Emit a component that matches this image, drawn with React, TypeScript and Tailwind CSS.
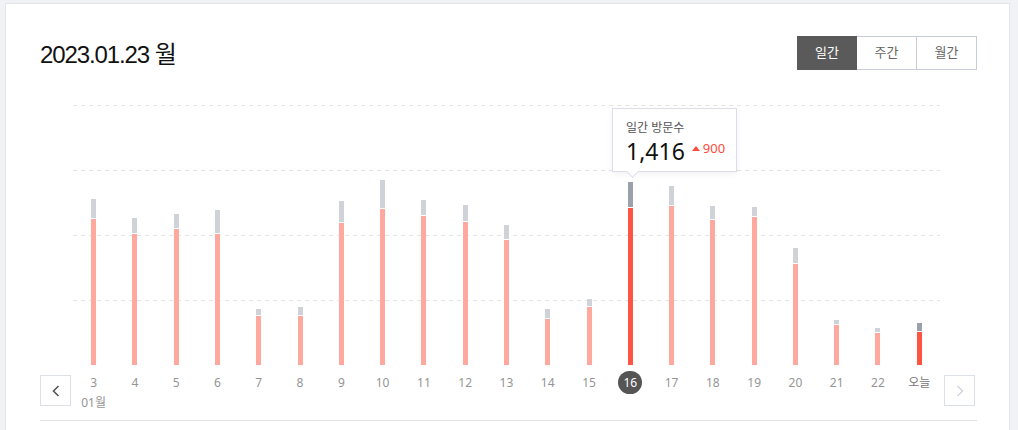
import React from "react";

type Bar = { l: string; g: number; r: number; hl?: boolean };

const BASE = 365;
const bars: Bar[] = [
  { l: "3", g: 199, r: 219 },
  { l: "4", g: 218, r: 234 },
  { l: "5", g: 214, r: 229 },
  { l: "6", g: 210, r: 234 },
  { l: "7", g: 309, r: 316 },
  { l: "8", g: 307, r: 316 },
  { l: "9", g: 201, r: 223 },
  { l: "10", g: 180, r: 209 },
  { l: "11", g: 200, r: 216 },
  { l: "12", g: 205, r: 222 },
  { l: "13", g: 225, r: 240 },
  { l: "14", g: 309, r: 319 },
  { l: "15", g: 299, r: 307 },
  { l: "16", g: 182, r: 208, hl: true },
  { l: "17", g: 186, r: 206 },
  { l: "18", g: 206, r: 220 },
  { l: "19", g: 207, r: 217 },
  { l: "20", g: 248, r: 264 },
  { l: "21", g: 320, r: 325 },
  { l: "22", g: 328, r: 333 },
  { l: "오늘", g: 323, r: 332, hl: true },
];

const font = { fontFamily: '"Noto Sans", "Noto Sans CJK KR", sans-serif' };

function GridLine() {
  return (
    <div className="h-px w-full bg-[repeating-linear-gradient(to_right,#e4e4e4_0,#e4e4e4_4px,transparent_4px,transparent_8px)]" />
  );
}

export default function App() {
  return (
    <div
      className="w-[1018px] h-[430px] overflow-hidden bg-[#f1f2f5] pl-[5px] pt-[3px]"
      style={font}
    >
      <div className="w-[1005px] h-[460px] bg-white border border-[#e4e6ea] pl-[34px] pr-[32px] pt-[32px]">
        {/* Header */}
        <div className="flex items-center justify-between h-[34px]">
          <div
            className="text-[24px] leading-[28px] text-[#111] tracking-[-1.1px] mt-[4px]"
            style={{ fontFamily: '"Liberation Sans", "Noto Sans CJK KR", sans-serif' }}
          >
            2023.01.23 월
          </div>
          <div className="flex h-[34px] text-[13px]">
            <div className="w-[60px] flex items-center justify-center bg-[#5a5a5a] text-white border border-[#5a5a5a]">
              일간
            </div>
            <div className="w-[60px] flex items-center justify-center text-[#666] border border-l-0 border-[#c6ccd8]">
              주간
            </div>
            <div className="w-[60px] flex items-center justify-center text-[#666] border border-l-0 border-[#c6ccd8]">
              월간
            </div>
          </div>
        </div>

        {/* Chart */}
        <div className="relative ml-[33px] w-[867px] h-[260px] mt-[35px]">
          <div className="absolute inset-0 flex flex-col">
            <GridLine />
            <div className="h-[64px]" />
            <GridLine />
            <div className="h-[64px]" />
            <GridLine />
            <div className="h-[64px]" />
            <GridLine />
          </div>
          <div className="relative flex h-full">
            {bars.map((b) => (
              <div key={b.l} className="flex-1 flex flex-col items-center justify-end">
                <div
                  className={`w-[5px] ${b.hl ? "bg-[#9ba1aa]" : "bg-[#cfd3d8]"}`}
                  style={{ height: b.r - b.g - 1 }}
                />
                <div className="h-px w-[5px]" />
                <div
                  className={`w-[5px] ${b.hl ? "bg-[#ff5443]" : "bg-[#ffa89e]"}`}
                  style={{ height: BASE - b.r }}
                />
              </div>
            ))}
          </div>
          {/* Tooltip */}
          <div className="absolute left-[539px] top-[3px] w-[125px] h-[64px] bg-white border border-[#dcdde9] shadow-[0_2px_6px_rgba(0,0,0,0.06)] pl-[13px] pt-[11px]">
            <div className="text-[12px] leading-[16px] text-[#555]">일간 방문수</div>
            <div className="flex items-center">
              <span className="text-[23px] leading-[30px] text-[#111]">1,416</span>
              <span className="ml-[7px] flex items-center text-[13px] leading-[16px] text-[#ff4b3a] mb-[6px]">
                <span className="w-0 h-0 border-l-[4px] border-r-[4px] border-b-[5px] border-l-transparent border-r-transparent border-b-[#ff4b3a] mr-[3px]" />
                900
              </span>
            </div>
            <div className="absolute left-[15px] bottom-[-5px] w-[9px] h-[9px] bg-white border-r border-b border-[#dcdde9] rotate-45" />
          </div>
        </div>

        {/* Labels row */}
        <div className="flex items-start mt-[6px]">
          <div className="w-[31px] h-[31px] mt-[4px] border border-[#dcdfe6] flex items-center justify-center">
            <svg width="10" height="14" viewBox="0 0 10 14" fill="none">
              <path d="M7.5 2 L2.5 7 L7.5 12" stroke="#555" strokeWidth="1.6" />
            </svg>
          </div>
          <div className="ml-[2px] w-[867px] flex">
            {bars.map((b, i) => (
              <div key={b.l} className="flex-1 flex flex-col items-center">
                <div className="h-[23px] flex items-center justify-center">
                  {b.l === "16" ? (
                    <span className="w-[24px] h-[23px] rounded-full bg-[#555] text-white text-[12px] flex items-center justify-center">
                      16
                    </span>
                  ) : (
                    <span className={`text-[12px] ${b.l === "오늘" ? "text-[#777]" : "text-[#959595]"}`}>
                      {b.l}
                    </span>
                  )}
                </div>
                {i === 0 && (
                  <div className="text-[12px] leading-[16px] mt-[1px] text-[#959595]">01월</div>
                )}
              </div>
            ))}
          </div>
          <div className="ml-[4px] w-[31px] h-[31px] mt-[4px] border border-[#dcdfe6] flex items-center justify-center">
            <svg width="10" height="14" viewBox="0 0 10 14" fill="none">
              <path d="M2.5 2 L7.5 7 L2.5 12" stroke="#d3d6de" strokeWidth="1.6" />
            </svg>
          </div>
        </div>
        <div className="mt-[9px] h-px w-full bg-[#e2e2e2]" />
      </div>
    </div>
  );
}
